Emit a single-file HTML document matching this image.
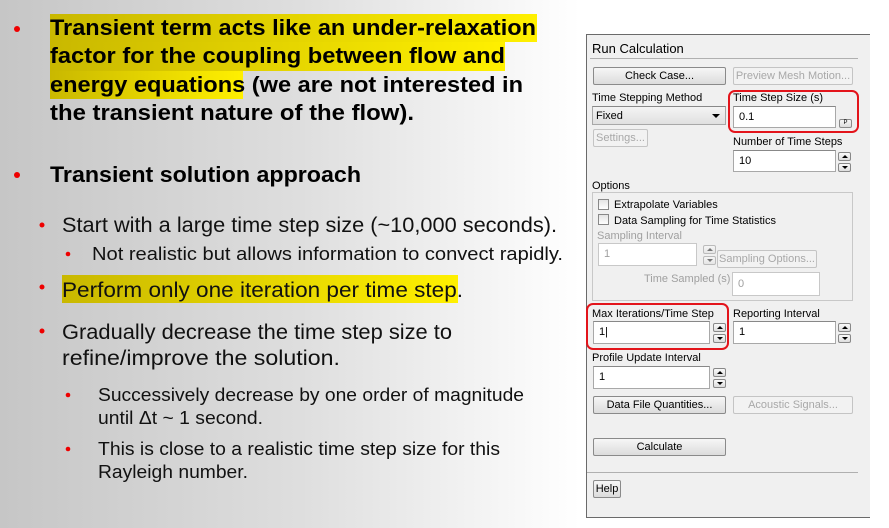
<!DOCTYPE html>
<html><head><meta charset="utf-8"><style>
*{margin:0;padding:0;box-sizing:border-box}
body{width:889px;height:528px;overflow:hidden;position:relative;background:linear-gradient(90deg,#c6c6c6 0px,#dedede 300px,#f8f8f8 520px,#fff 580px);font-family:"Liberation Sans",sans-serif}
svg.l{position:absolute;left:0;top:0}
.p{position:absolute;left:586px;top:34px;width:284px;height:484px;background:#f0f0f0;border:1px solid #6a6a6a;border-right:none}
.a{position:absolute;font-size:11px;color:#000;white-space:nowrap;line-height:12px}
.g{color:#a0a0a0}
.b{position:absolute;border:1px solid #8a8a8a;border-radius:2px;background:linear-gradient(#f6f6f6,#dcdcdc);font-size:11px;text-align:center;line-height:16px;color:#000}
.d{border-color:#c4c4c4;background:#f2f2f2;color:#a8a8a8}
.i{position:absolute;background:#fff;border:1px solid #a8a8a8;border-top-color:#888;font-size:11px;padding:4px 0 0 5px;line-height:12px}
.s{position:absolute;width:13px;height:21px}
.s div{height:9px;border:1px solid #888;border-radius:2px;background:linear-gradient(#fafafa,#ddd);margin-bottom:2px;position:relative}
.s div:after{content:"";position:absolute;left:3px;border-left:3px solid transparent;border-right:3px solid transparent}
.s .u:after{top:2px;border-bottom:3px solid #000}
.s .w:after{top:2px;border-top:3px solid #000}
.r{position:absolute;border:2px solid #e3141b;border-radius:7px}
.cb{position:absolute;width:11px;height:11px;border:1px solid #888;background:linear-gradient(#e4e4e4,#fff)}
</style></head><body>
<svg class="l" width="580" height="528" xmlns="http://www.w3.org/2000/svg">
<defs><linearGradient id="h" x1="0" x2="1"><stop offset="0" stop-color="#c9b800"/><stop offset="1" stop-color="#fff000"/></linearGradient></defs>
<rect x="50" y="14" width="487" height="28" fill="url(#h)"/>
<rect x="50" y="42" width="455" height="29" fill="url(#h)"/>
<rect x="50" y="71" width="193" height="28" fill="url(#h)"/>
<rect x="62" y="275" width="396" height="28" fill="url(#h)"/>
<g fill="#e00">
<circle cx="17" cy="29" r="3"/><circle cx="17" cy="175" r="3"/>
<circle cx="42" cy="225" r="2.5"/><circle cx="42" cy="287" r="2.5"/><circle cx="42" cy="331" r="2.5"/>
<circle cx="68" cy="254" r="2.3"/><circle cx="68" cy="395" r="2.3"/><circle cx="68" cy="449" r="2.3"/>
</g>
<g font-family="Liberation Sans, sans-serif" fill="#000">
<g font-weight="bold" font-size="22">
<text x="50" y="35" textLength="486" lengthAdjust="spacingAndGlyphs">Transient term acts like an under-relaxation</text>
<text x="50" y="63" textLength="455" lengthAdjust="spacingAndGlyphs">factor for the coupling between flow and</text>
<text x="50" y="92" textLength="473" lengthAdjust="spacingAndGlyphs">energy equations (we are not interested in</text>
<text x="50" y="120" textLength="364" lengthAdjust="spacingAndGlyphs">the transient nature of the flow).</text>
<text x="50" y="182" textLength="311" lengthAdjust="spacingAndGlyphs">Transient solution approach</text>
</g>
<g font-size="21" fill="#111">
<text x="62" y="232" textLength="495" lengthAdjust="spacingAndGlyphs">Start with a large time step size (~10,000 seconds).</text>
<text x="62" y="297" textLength="401" lengthAdjust="spacingAndGlyphs">Perform only one iteration per time step.</text>
<text x="62" y="339" textLength="390" lengthAdjust="spacingAndGlyphs">Gradually decrease the time step size to</text>
<text x="62" y="365" textLength="278" lengthAdjust="spacingAndGlyphs">refine/improve the solution.</text>
</g>
<g font-size="18" fill="#111">
<text x="92" y="260" textLength="471" lengthAdjust="spacingAndGlyphs">Not realistic but allows information to convect rapidly.</text>
<text x="98" y="401" textLength="426" lengthAdjust="spacingAndGlyphs">Successively decrease by one order of magnitude</text>
<text x="98" y="424" textLength="165" lengthAdjust="spacingAndGlyphs">until Δt ~ 1 second.</text>
<text x="98" y="455" textLength="402" lengthAdjust="spacingAndGlyphs">This is close to a realistic time step size for this</text>
<text x="98" y="478" textLength="150" lengthAdjust="spacingAndGlyphs">Rayleigh number.</text>
</g></g></svg>

<div class="p"></div>
<div class="a" style="left:592px;top:42px;font-size:13px;line-height:14px">Run Calculation</div>
<div style="position:absolute;left:590px;top:58px;width:268px;height:1px;background:#b0b0b0"></div>
<div class="b" style="left:593px;top:67px;width:133px;height:18px">Check Case...</div>
<div class="b d" style="left:733px;top:67px;width:120px;height:18px">Preview Mesh Motion...</div>
<div class="a" style="left:592px;top:92px">Time Stepping Method</div>
<div class="i" style="left:592px;top:106px;width:134px;height:19px;background:linear-gradient(#f4f4f4,#e0e0e0);padding-left:3px;padding-top:3px">Fixed<span style="position:absolute;right:5px;top:7px;border-left:4px solid transparent;border-right:4px solid transparent;border-top:4px solid #000"></span></div>
<div class="a" style="left:733px;top:92px">Time Step Size (s)</div>
<div class="i" style="left:733px;top:106px;width:103px;height:22px">0.1</div>
<div class="b" style="left:839px;top:119px;width:13px;height:9px;font-size:6px;line-height:7px">P</div>
<div class="r" style="left:728px;top:90px;width:131px;height:43px"></div>
<div class="b d" style="left:593px;top:129px;width:55px;height:18px">Settings...</div>
<div class="a" style="left:733px;top:136px">Number of Time Steps</div>
<div class="i" style="left:733px;top:150px;width:103px;height:22px">10</div>
<div class="s" style="left:838px;top:152px"><div class="u"></div><div class="w"></div></div>
<div class="a" style="left:592px;top:180px">Options</div>
<div style="position:absolute;left:592px;top:192px;width:261px;height:109px;border:1px solid #c8c8c8"></div>
<div class="cb" style="left:598px;top:199px"></div><div class="a" style="left:614px;top:199px">Extrapolate Variables</div>
<div class="cb" style="left:598px;top:214px"></div><div class="a" style="left:614px;top:215px">Data Sampling for Time Statistics</div>
<div class="a g" style="left:597px;top:230px">Sampling Interval</div>
<div class="i g" style="left:598px;top:243px;width:99px;height:23px;border-color:#c8c8c8">1</div>
<div class="s" style="left:703px;top:245px;opacity:.5"><div class="u"></div><div class="w"></div></div>
<div class="b d" style="left:717px;top:250px;width:100px;height:18px">Sampling Options...</div>
<div class="a g" style="left:644px;top:273px">Time Sampled (s)</div>
<div class="i g" style="left:732px;top:272px;width:88px;height:24px;border-color:#c8c8c8;padding-top:5px">0</div>
<div class="a" style="left:592px;top:308px">Max Iterations/Time Step</div>
<div class="i" style="left:593px;top:321px;width:117px;height:23px">1|</div>
<div class="s" style="left:713px;top:323px"><div class="u"></div><div class="w"></div></div>
<div class="r" style="left:586px;top:303px;width:143px;height:47px"></div>
<div class="a" style="left:733px;top:308px">Reporting Interval</div>
<div class="i" style="left:733px;top:321px;width:103px;height:23px">1</div>
<div class="s" style="left:838px;top:323px"><div class="u"></div><div class="w"></div></div>
<div class="a" style="left:592px;top:352px">Profile Update Interval</div>
<div class="i" style="left:593px;top:366px;width:117px;height:23px">1</div>
<div class="s" style="left:713px;top:368px"><div class="u"></div><div class="w"></div></div>
<div class="b" style="left:593px;top:396px;width:133px;height:18px">Data File Quantities...</div>
<div class="b d" style="left:733px;top:396px;width:120px;height:18px">Acoustic Signals...</div>
<div class="b" style="left:593px;top:438px;width:133px;height:18px">Calculate</div>
<div style="position:absolute;left:587px;top:472px;width:271px;height:1px;background:#b0b0b0"></div>
<div class="b" style="left:593px;top:480px;width:28px;height:18px">Help</div>
</body></html>
